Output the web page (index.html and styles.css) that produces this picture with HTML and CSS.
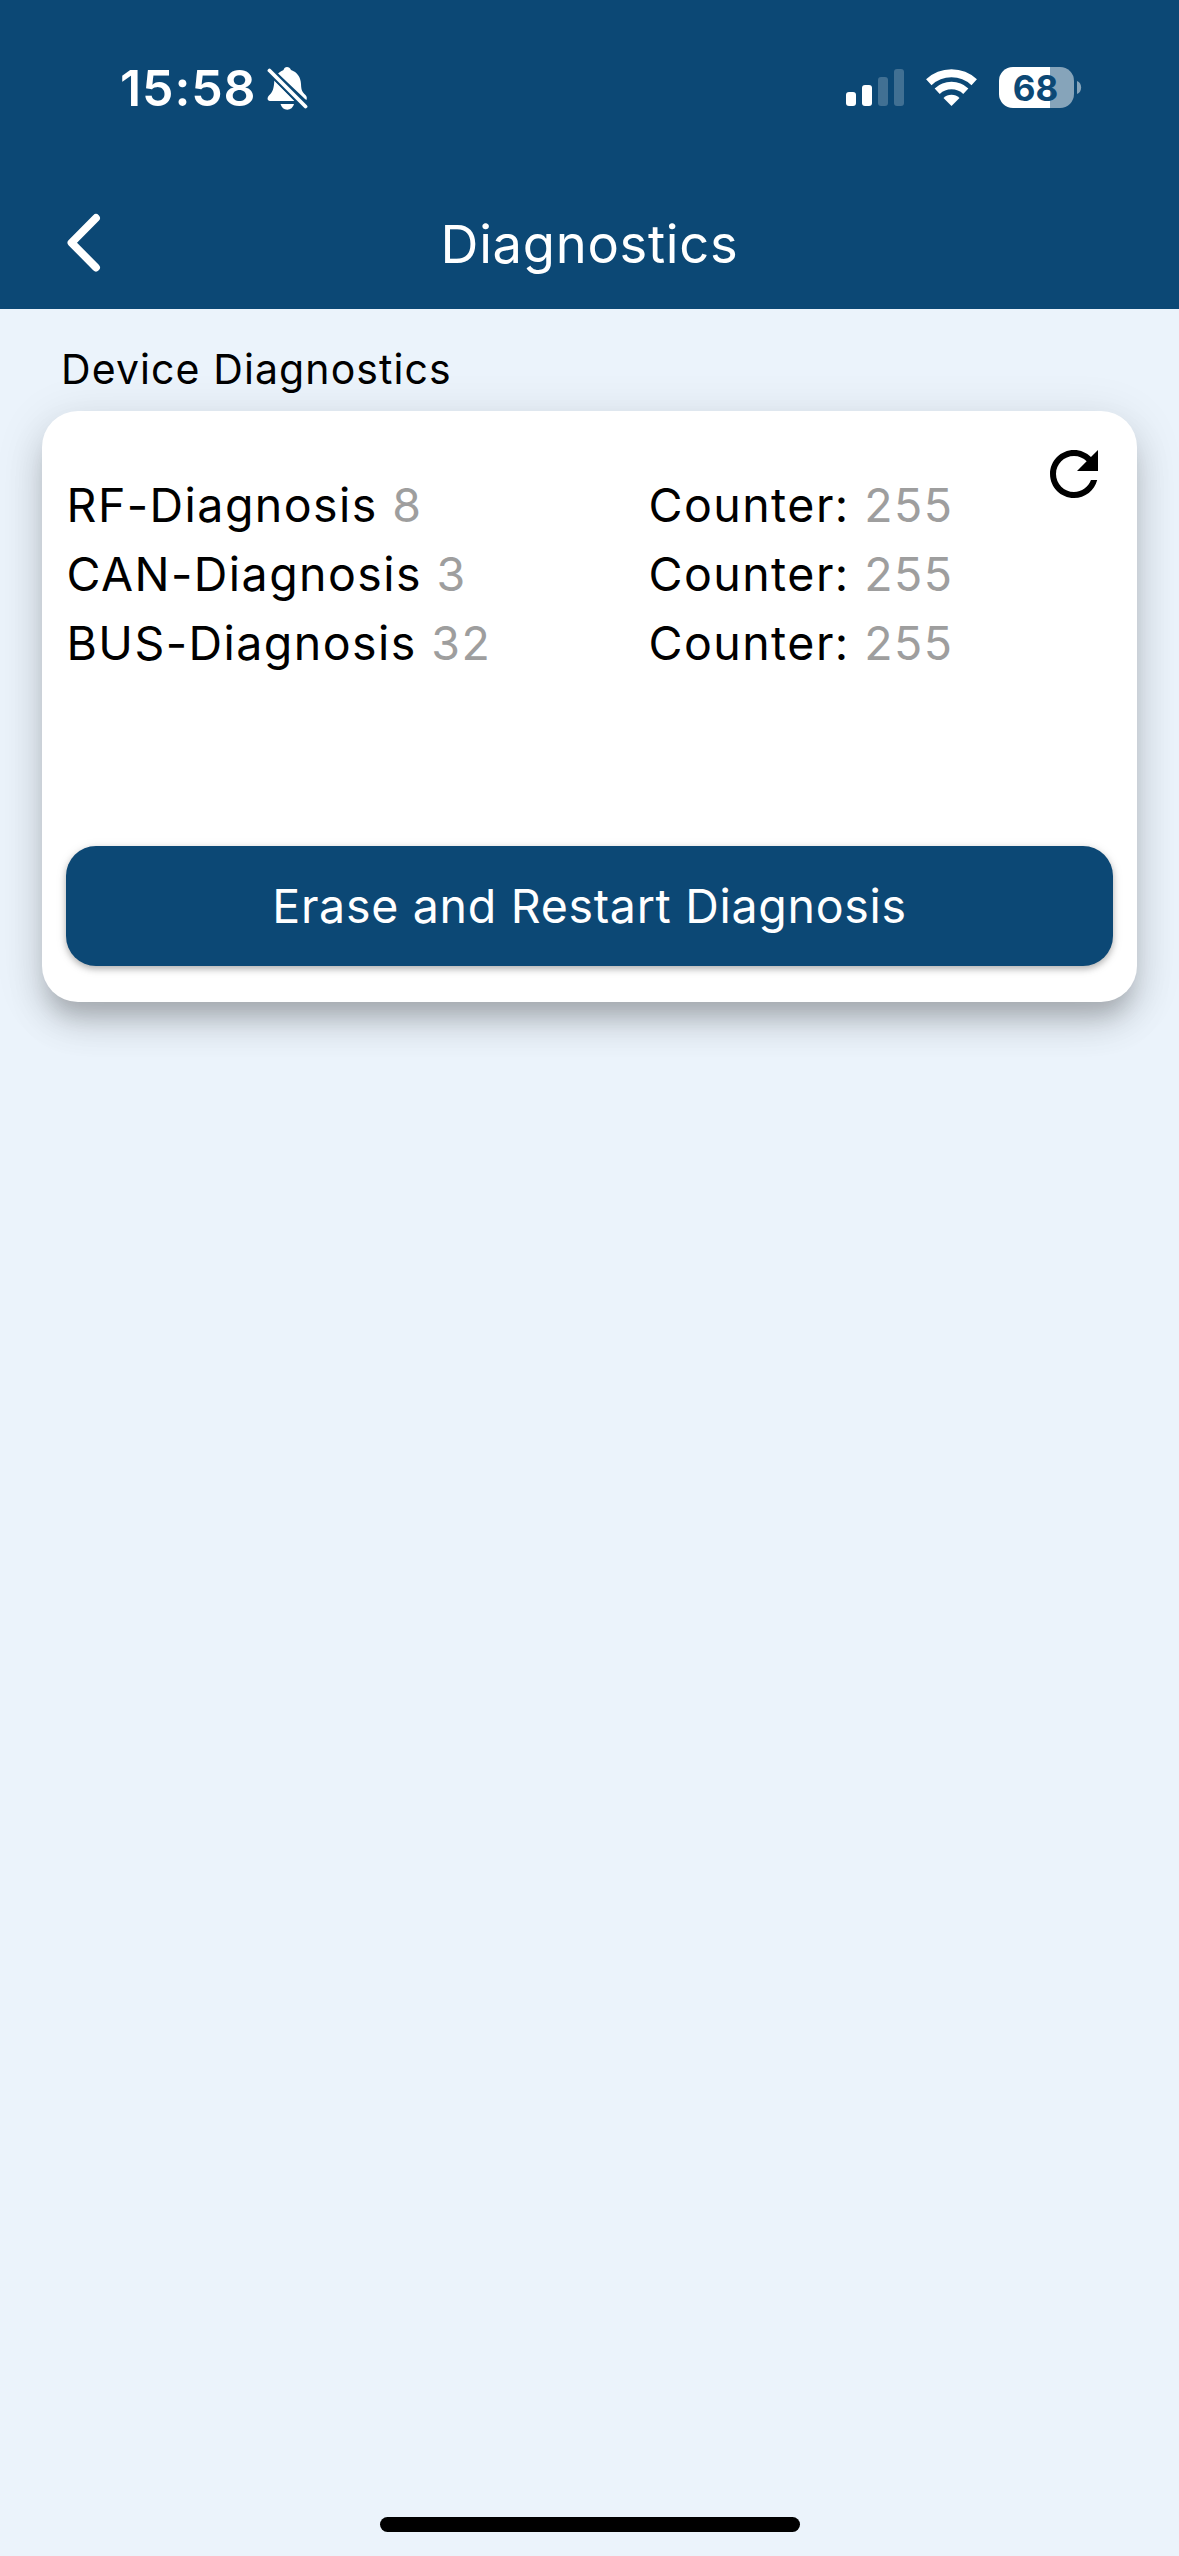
FILE: index.html
```html
<!DOCTYPE html>
<html lang="en">
<head>
<meta charset="utf-8">
<title>Diagnostics</title>
<link rel="stylesheet" href="styles.css">
</head>
<body>
<div class="screen">
  <header class="header">
    <div class="status">
      <span class="time">15:58</span>
      <svg class="bell" width="42" height="46" viewBox="266 66 42 46" fill="#fff">
        <path d="M278 73.500C281 71 282.500 70.500 283.500 70C284 68 285.300 67 287 67S290.300 68 291 70C297 72 300.800 77 301 84C301.200 91 302.500 92 305.500 95C307 96.700 307 97.500 306.500 100L305 99Z"/>
        <path d="M274.300 80.300L294.500 100.900H270C267 100.900 267 97.500 269 95.500C272.500 92.300 274 89 274.300 80.300Z"/>
        <path d="M280.500 104H294C293 107.500 290.500 109.700 287.200 109.700S281.500 107.500 280.500 104Z"/>
        <path d="M270 71L305.500 106.500" stroke="#0c4875" stroke-width="7.600"/>
        <path d="M269.500 70.500L305.500 106.500" stroke="#fff" stroke-width="3.800" stroke-linecap="round"/>
      </svg>
      <svg class="signal" width="58" height="38" viewBox="0 0 58 38" fill="#fff">
        <rect x="0" y="23" width="10" height="14" rx="3"/>
        <rect x="16" y="16" width="10" height="21" rx="3"/>
        <rect x="32" y="8" width="10" height="29" rx="3" opacity=".22"/>
        <rect x="48" y="0" width="10" height="37" rx="3" opacity=".22"/>
      </svg>
      <svg class="wifi" width="52" height="38" viewBox="0 0 52 38" fill="none" stroke="#fff">
        <path d="M2.800 13.200A33.300 33.300 0 0 1 48.200 13.200" stroke-width="8"/>
        <path d="M11.200 22.200A21 21 0 0 1 39.800 22.200" stroke-width="7.500"/>
        <path d="M17.500 29A11.500 11.500 0 0 1 33.500 29L25.500 37Z" fill="#fff" stroke="none"/>
      </svg>
      <div class="battery"><span class="level">68</span></div>
      <svg class="nub" width="5" height="14" viewBox="0 0 5 14"><path d="M0 0C5.500 2 5.500 11 0 13Z" fill="#86a4ba"/></svg>
    </div>
    <div class="navbar">
      <svg class="back" width="36" height="60" viewBox="0 0 36 60"><path d="M30 5L5.500 29.700L30 54.500" fill="none" stroke="#fff" stroke-width="7.800" stroke-linecap="round" stroke-linejoin="round"/></svg>
      <h1 class="title">Diagnostics</h1>
    </div>
  </header>
  <main class="content">
    <h2 class="section">Device Diagnostics</h2>
    <section class="card">
      <div class="results">
        <div class="names">
          <p>RF-Diagnosis <b>8</b></p>
          <p>CAN-Diagnosis <b>3</b></p>
          <p>BUS-Diagnosis <b>32</b></p>
        </div>
        <div class="counters">
          <p>Counter: <b>255</b></p>
          <p>Counter: <b>255</b></p>
          <p>Counter: <b>255</b></p>
        </div>
        <svg class="refresh" width="72" height="72" viewBox="0 0 24 24"><path d="M17.650 6.350C16.200 4.900 14.210 4 12 4c-4.420 0-7.990 3.580-7.990 8s3.570 8 7.990 8c3.730 0 6.840-2.550 7.730-6h-2.080c-.820 2.330-3.040 4-5.650 4-3.310 0-6-2.690-6-6s2.690-6 6-6c1.660 0 3.140.690 4.220 1.780L13 11h7V4l-2.350 2.350z"/></svg>
      </div>
      <button class="erase">Erase and Restart Diagnosis</button>
    </section>
  </main>
  <div class="home"></div>
</div>
</body>
</html>
```
FILE: styles.css
```css
* { box-sizing: border-box; margin: 0; padding: 0; }
body {
  background: #ebf3fb;
  color: #000;
  font-family: Inter, "Liberation Sans", sans-serif;
}
.screen { display: flex; flex-direction: column; width: 1179px; height: 2556px; }

.header { height: 309px; background: #0c4875; color: #fff; }
.status { display: flex; align-items: flex-start; height: 178px; padding: 66px 0 0 120px; }
.time { width: 146px; font-size: 50px; line-height: 60px; margin-top: -8px; font-weight: 600; letter-spacing: 0.900px; }
.signal { margin: 3px 0 0 538px; }
.wifi { margin: 3px 0 0 22px; }
.battery {
  width: 75px; height: 41px; margin: 1px 0 0 21px; border-radius: 14px;
  background: linear-gradient(90deg, #fff 51px, #86a4ba 51px);
  color: #0c4875; text-align: center;
}
.level { display: block; padding-right: 2px; font-size: 35px; line-height: 42px; font-weight: 700; }
.nub { margin: 15px 0 0 3px; }
.navbar { display: grid; grid-template-columns: 120px 1fr 120px; align-items: start; height: 131px; }
.back { margin: 35px 0 0 66px; }
.title { margin-top: 34px; text-align: center; font-size: 52.500px; line-height: 64px; font-weight: 400; letter-spacing: 0.700px; }

.content { flex: 1; padding: 36px 42px 0; }
.section { height: 66px; padding-left: 19px; font-size: 41px; line-height: 48px; font-weight: 400; letter-spacing: 1.100px; }
.card {
  height: 591px; padding: 27px 24px 36px; border-radius: 36px; background: #fff;
  display: flex; flex-direction: column; justify-content: space-between;
  box-shadow: 0 20px 20px -8px rgba(0,0,0,.14), 0 22px 36px 0 rgba(0,0,0,.13), 0 9px 48px 5px rgba(0,0,0,.09);
}
.results { display: grid; grid-template-columns: 582px 390px 72px; font-size: 46.500px; line-height: 69px; letter-spacing: 1.450px; }
.names, .counters { padding: 33px 0 0 0.500px; white-space: nowrap; }
.results b { font-weight: 400; color: #9e9e9e; }
.erase {
  height: 120px; border: 0; border-radius: 30px; background: #0c4875; color: #fff;
  font: 400 46.500px/120px Inter, "Liberation Sans", sans-serif; letter-spacing: 0.700px;
  box-shadow: 0 3px 6px rgba(0,0,0,.24), 0 2px 12px rgba(0,0,0,.1);
}
.home { width: 420px; height: 15px; margin: 0 auto 24px; border-radius: 8px; background: #000; }
```
